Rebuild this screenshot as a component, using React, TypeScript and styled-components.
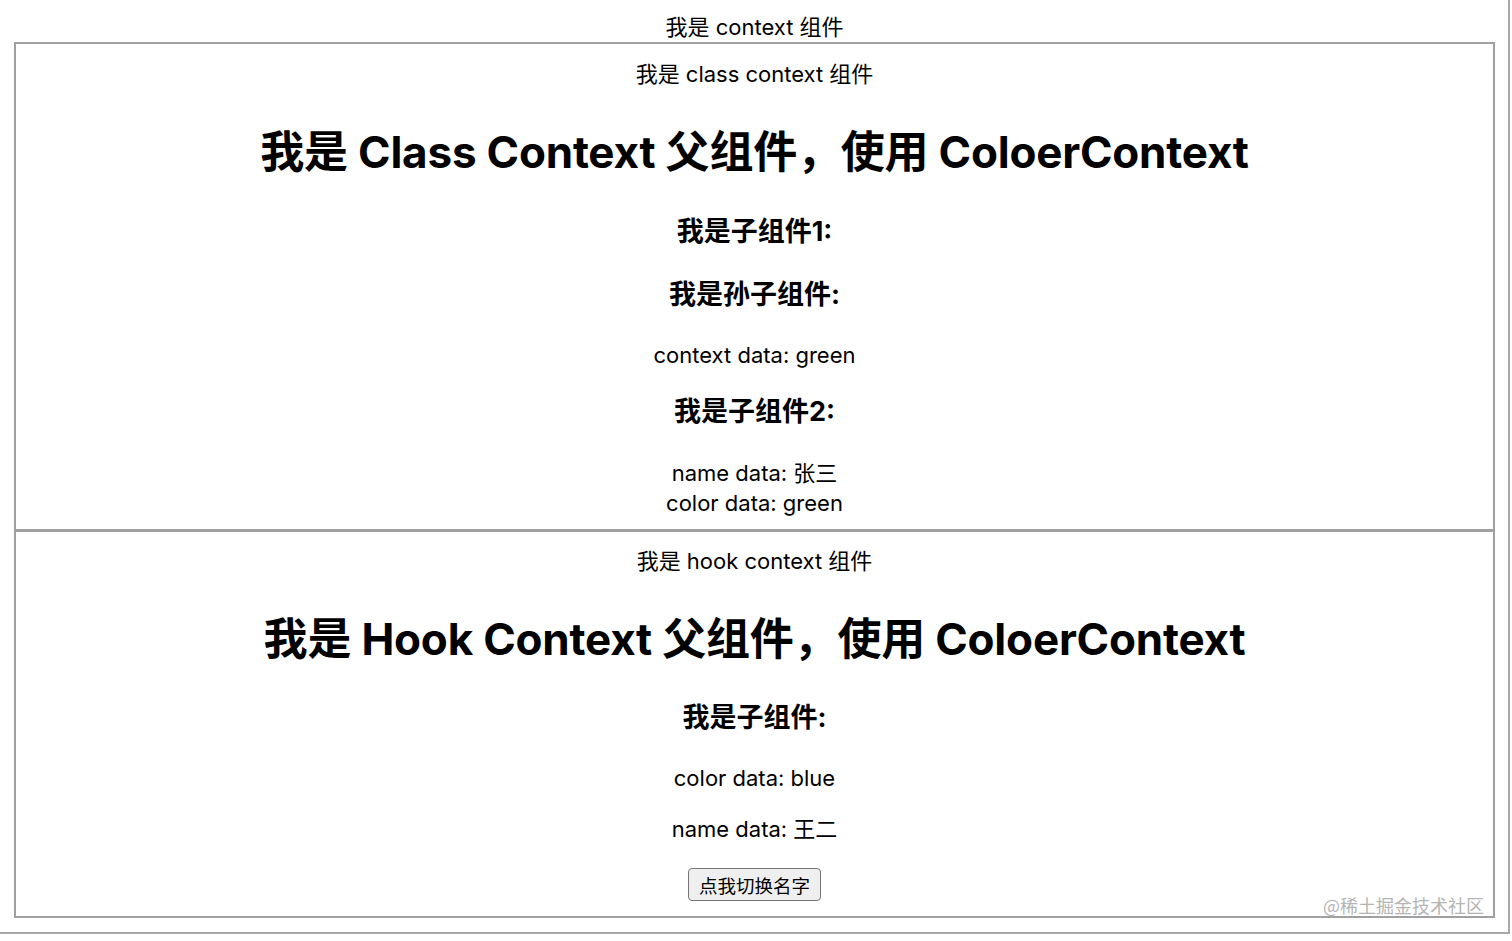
import styled, { createGlobalStyle } from 'styled-components';

const GlobalStyle = createGlobalStyle`
	html, body {
		margin: 0;
		padding: 0;
		background: #ffffff;
	}
	body {
		font-family: Inter, 'Noto Sans CJK SC', sans-serif;
		color: #000000;
	}
`;

const App = () => {
	return (
		<>
			<GlobalStyle />
			<Page>
				<Caption $top={12}>我是 context 组件</Caption>
				<Panel $pt={15} $pb={11}>
					<Caption>我是 class context 组件</Caption>
					<Heading $mt={35}>我是 Class Context 父组件，使用 ColoerContext</Heading>
					<SubHeading $mt={35}>我是子组件1:</SubHeading>
					<SubHeading $mt={29}>我是孙子组件:</SubHeading>
					<Line $mt={28}>context data: green</Line>
					<SubHeading $mt={25}>我是子组件2:</SubHeading>
					<Line $mt={29}>name data: 张三</Line>
					<Line>color data: green</Line>
				</Panel>
				<Panel $pt={14} $pb={15} $joined>
					<Caption>我是 hook context 组件</Caption>
					<Heading $mt={35}>我是 Hook Context 父组件，使用 ColoerContext</Heading>
					<SubHeading $mt={34}>我是子组件:</SubHeading>
					<Line $mt={28}>color data: blue</Line>
					<Line $mt={21}>name data: 王二</Line>
					<ButtonRow>
						<SwitchButton>点我切换名字</SwitchButton>
					</ButtonRow>
					<Watermark>@稀土掘金技术社区</Watermark>
				</Panel>
			</Page>
		</>
	);
};

export default App;

const Page = styled.div`
	width: 1510px;
	padding: 0 13px 14px 14px;
	box-sizing: border-box;
	border-right: 2px solid #a8a8a8;
	border-bottom: 2px solid #a8a8a8;
`;

const Caption = styled.div<{ $top?: number }>`
	padding-top: ${(p) => p.$top ?? 0}px;
	font-size: 22px;
	line-height: 30px;
	text-align: center;
`;

const Panel = styled.div<{ $pt: number; $pb: number; $joined?: boolean }>`
	position: relative;
	border: 2px solid #a0a0a0;
	border-top-width: ${(p) => (p.$joined ? 1 : 2)}px;
	padding: ${(p) => p.$pt}px 0 ${(p) => p.$pb}px;
	text-align: center;
`;

const Heading = styled.h1<{ $mt: number }>`
	margin: ${(p) => p.$mt}px 0 0;
	font-size: 44px;
	line-height: 56px;
	letter-spacing: -0.2px;
	font-weight: 700;
`;

const SubHeading = styled.h3<{ $mt: number }>`
	margin: ${(p) => p.$mt}px 0 0;
	font-size: 27px;
	line-height: 34px;
	font-weight: 700;
`;

const Line = styled.div<{ $mt?: number }>`
	margin-top: ${(p) => p.$mt ?? 0}px;
	font-size: 22px;
	line-height: 30px;
`;

const ButtonRow = styled.div`
	margin-top: 24px;
	display: flex;
	justify-content: center;
`;

const SwitchButton = styled.button`
	height: 33px;
	padding: 0 10px;
	font-family: Inter, 'Noto Sans CJK SC', sans-serif;
	font-size: 18.5px;
	color: #000000;
	background: #efefef;
	border: 1.5px solid #767676;
	border-radius: 4px;
`;

const Watermark = styled.span`
	position: absolute;
	right: 9px;
	bottom: 0;
	font-family: 'Noto Sans CJK SC', sans-serif;
	font-size: 18px;
	line-height: 22px;
	color: #b4b4b4;
`;
